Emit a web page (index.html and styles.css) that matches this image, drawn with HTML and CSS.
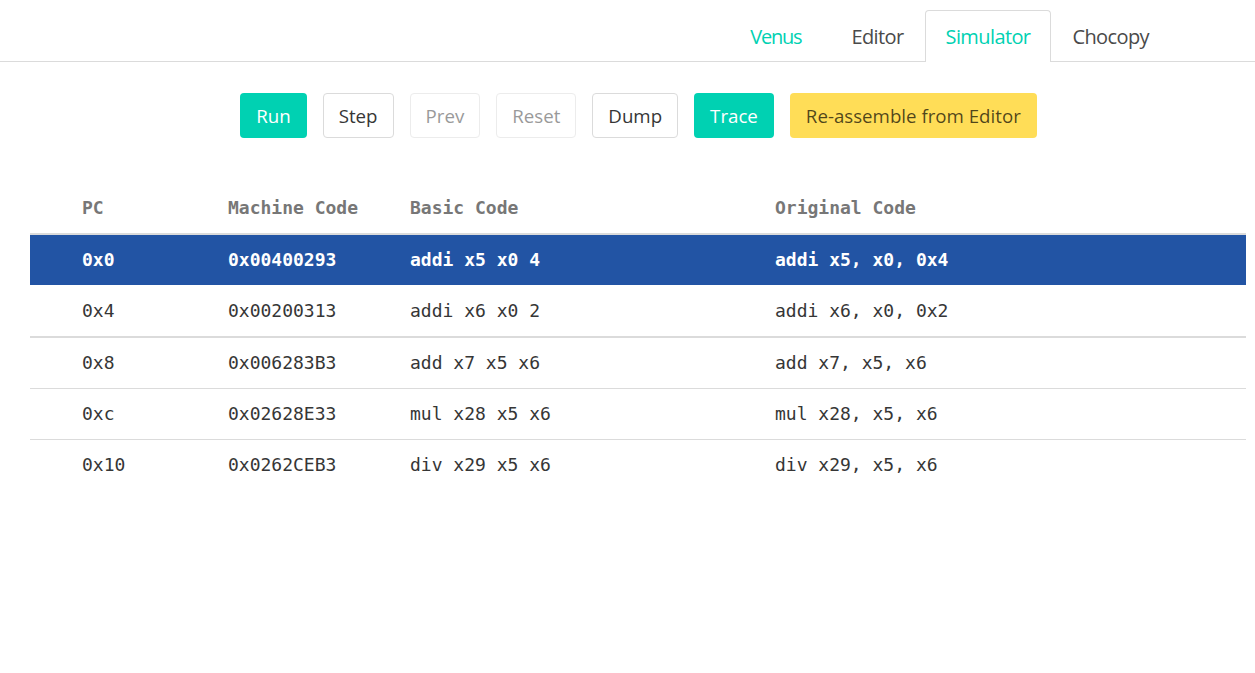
FILE: index.html
```html
<!DOCTYPE html>
<html>
<head>
<meta charset="utf-8">
<title>Venus</title>
<link rel="stylesheet" href="styles.css">
</head>
<body>
<nav class="tabs">
  <ul>
    <li><a class="tab brand">Venus</a></li>
    <li><a class="tab">Editor</a></li>
    <li class="active"><a class="tab">Simulator</a></li>
    <li><a class="tab">Chocopy</a></li>
  </ul>
</nav>
<div class="controls">
  <button class="btn primary">Run</button>
  <button class="btn">Step</button>
  <button class="btn disabled">Prev</button>
  <button class="btn disabled">Reset</button>
  <button class="btn">Dump</button>
  <button class="btn primary">Trace</button>
  <button class="btn warning">Re-assemble from Editor</button>
</div>
<div class="table-wrap">
  <table class="prog">
    <colgroup>
      <col class="c-pc"><col class="c-mc"><col class="c-bc"><col class="c-oc">
    </colgroup>
    <thead>
      <tr><th>PC</th><th>Machine Code</th><th>Basic Code</th><th>Original Code</th></tr>
    </thead>
    <tbody>
      <tr class="sel"><td>0x0</td><td>0x00400293</td><td>addi x5 x0 4</td><td>addi x5, x0, 0x4</td></tr>
      <tr class="thick"><td>0x4</td><td>0x00200313</td><td>addi x6 x0 2</td><td>addi x6, x0, 0x2</td></tr>
      <tr><td>0x8</td><td>0x006283B3</td><td>add x7 x5 x6</td><td>add x7, x5, x6</td></tr>
      <tr><td>0xc</td><td>0x02628E33</td><td>mul x28 x5 x6</td><td>mul x28, x5, x6</td></tr>
      <tr class="last"><td>0x10</td><td>0x0262CEB3</td><td>div x29 x5 x6</td><td>div x29, x5, x6</td></tr>
    </tbody>
  </table>
</div>
</body>
</html>
```

FILE: styles.css
```css
* { box-sizing: border-box; }
html, body { margin: 0; padding: 0; background: #fff; }
body {
  font-family: "Open Sans", "Noto Sans", sans-serif;
  color: #4a4a4a;
}
.tabs {
  border-bottom: 1px solid #dbdbdb;
  padding-top: 10px;
  display: flex;
  justify-content: flex-end;
  padding-right: 85px;
}
.tabs ul {
  list-style: none;
  margin: 0 0 -1px 0;
  padding: 0;
  display: flex;
}
.tab {
  display: block;
  font-size: 20px;
  line-height: 30px;
  padding: 11px 20px 10px;
  color: #4a4a4a;
  border: 1px solid transparent;
  border-bottom: none;
  border-radius: 4px 4px 0 0;
  letter-spacing: -0.6px;
}
.tab.brand { color: #00d1b2; letter-spacing: -1.2px; padding-right: 28px; }
.active .tab {
  color: #00d1b2;
  background: #fff;
  border-color: #dbdbdb;
}
.controls {
  display: flex;
  justify-content: center;
  gap: 16px;
  margin-top: 31px;
  padding-left: 22px;
}
.btn {
  font-family: "Open Sans", "Noto Sans", sans-serif;
  font-size: 18.7px;
  height: 45px;
  padding: 0 15px;
  border: 1px solid #dbdbdb;
  border-radius: 4px;
  background: #fff;
  color: #363636;
}
.btn.primary { background: #00d1b2; border-color: transparent; color: #fff; }
.btn.warning { background: #ffdd57; border-color: transparent; color: rgba(0,0,0,.7); }
.btn.disabled { opacity: .5; }
.table-wrap {
  padding: 0 9px 0 30px;
  margin-top: 45px;
}
.prog {
  width: 100%;
  border-collapse: collapse;
  table-layout: fixed;
  font-family: "DejaVu Sans Mono", monospace;
  font-size: 18px;
  color: #363636;
}
.c-pc { width: 198px; }
.c-mc { width: 182px; }
.c-bc { width: 365px; }
.prog th, .prog td {
  text-align: left;
  padding: 0;
  height: 51px;
  border-bottom: 1px solid #dbdbdb;
  white-space: pre;
}
.prog th:first-child, .prog td:first-child { padding-left: 52px; }
.prog th {
  height: 51px;
  padding-bottom: 2px;
  color: #777;
  font-weight: bold;
  border-bottom: 2px solid #dbdbdb;
}
.prog tr.sel td {
  background: #2254a4;
  color: #fff;
  font-weight: bold;
  border-bottom: 1px solid #fff;
}
.prog tr.thick td { height: 52px; border-bottom: 2px solid #dbdbdb; }
.prog tr.last td { border-bottom: none; }
```
